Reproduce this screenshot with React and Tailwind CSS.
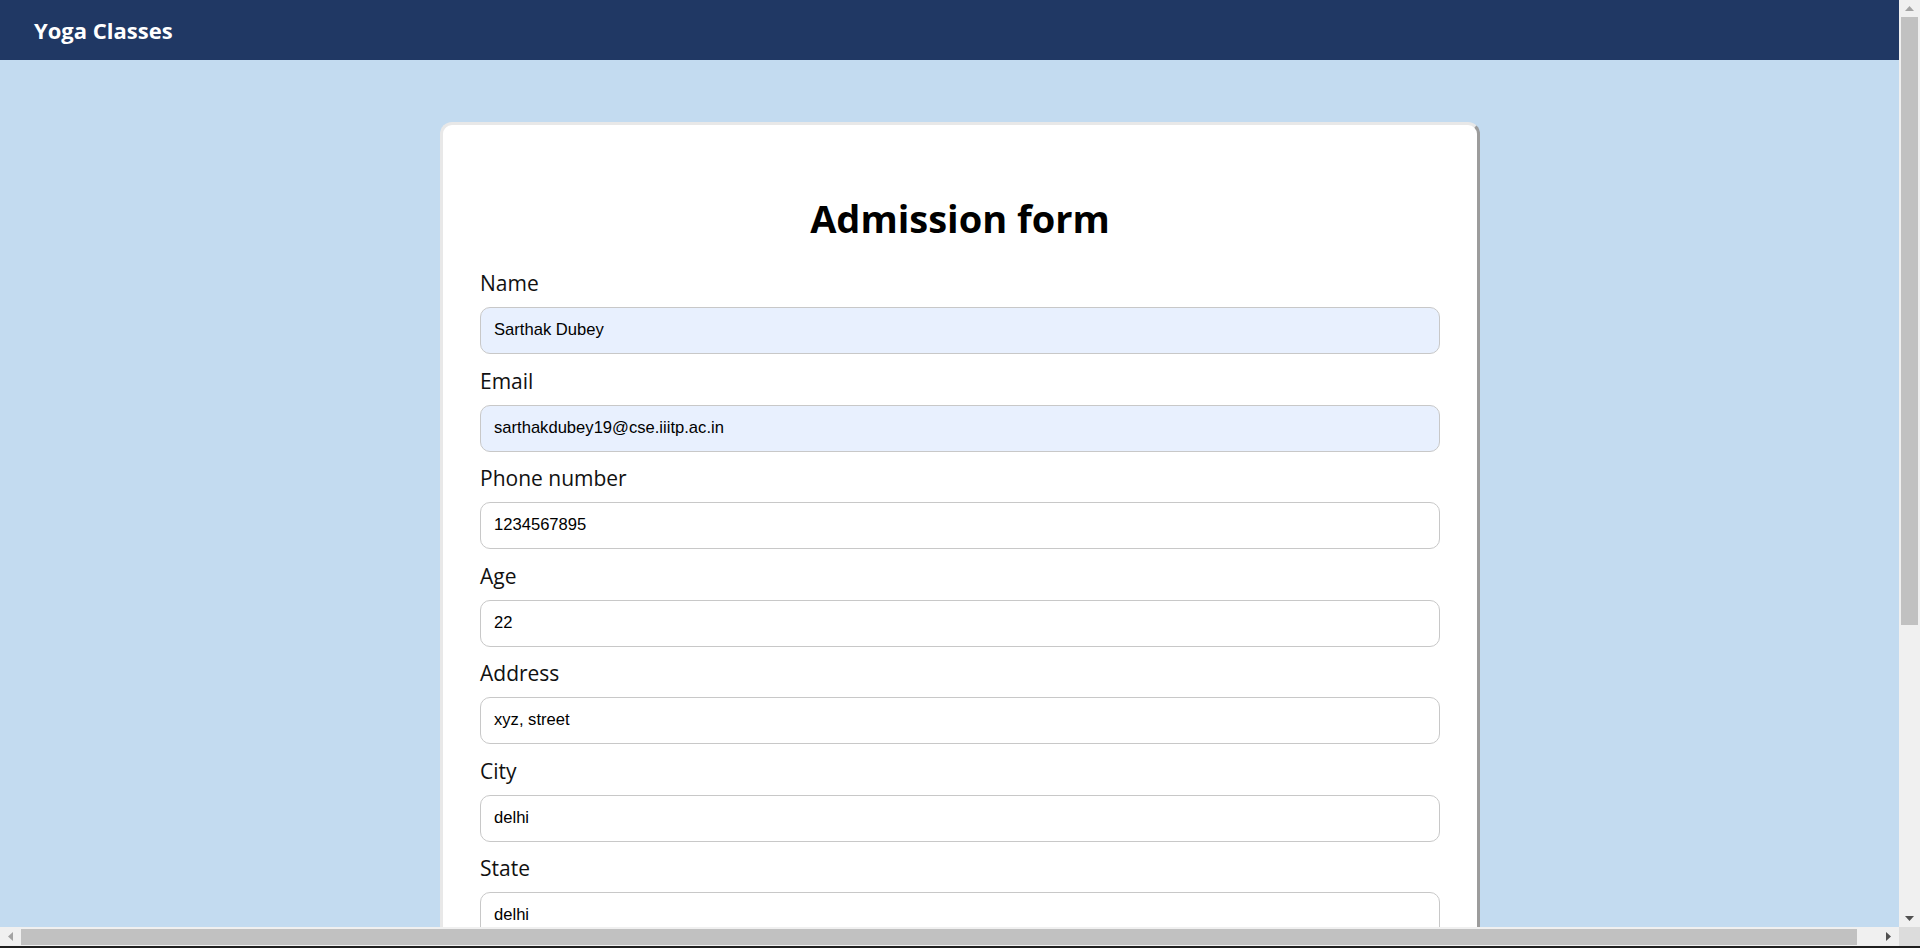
import React from "react";

const fields = [
  { label: "Name", value: "Sarthak Dubey", auto: true },
  { label: "Email", value: "sarthakdubey19@cse.iiitp.ac.in", auto: true },
  { label: "Phone number", value: "1234567895" },
  { label: "Age", value: "22" },
  { label: "Address", value: "xyz, street" },
  { label: "City", value: "delhi" },
  { label: "State", value: "delhi" },
];

function Field({ label, value, auto }) {
  return (
    <div className="flex flex-col mb-[11.5px]">
      <label className="h-[30px] leading-[30px] text-[21px] text-[#111] mb-[9px] font-['Open_Sans',sans-serif]">
        {label}
      </label>
      <div
        className={
          "h-[47px] w-[960px] rounded-[10px] border border-[#c8c8c8] flex items-center pl-[13px] text-[16.6px] text-black font-['Liberation_Sans',Arial,sans-serif] " +
          (auto ? "bg-[#e8f0fe]" : "bg-white")
        }
      >
        {value}
      </div>
    </div>
  );
}

export default function App() {
  return (
    <div className="h-[948px] w-full overflow-hidden flex flex-col bg-[#c3dbf0]">
      <div className="flex flex-1 min-h-0">
        <div className="flex-1 overflow-hidden">
          <div className="w-[1920px]">
            <header className="h-[60px] bg-[#203864] flex items-center pl-[34px]">
              <span className="text-white font-bold text-[22px] font-['Open_Sans',sans-serif]">
                Yoga Classes
              </span>
            </header>
            <div className="pt-[62px]">
              <div className="mx-auto w-[1040px] bg-white rounded-[12px] border-[3px] border-t-[#e8e8e8] border-l-[#e8e8e8] border-r-[#9c9c9c] border-b-[#9c9c9c] px-[37px] pt-[68px] pb-[40px]">
                <h1 className="text-center font-bold text-[38px] leading-[50px] text-black mb-[25px] font-['Open_Sans',sans-serif]">
                  Admission form
                </h1>
                {fields.map((f) => (
                  <Field key={f.label} {...f} />
                ))}
              </div>
            </div>
          </div>
        </div>
        <div className="w-[21px] bg-[#f0f0f0] flex flex-col items-center">
          <div className="h-[17px] w-full flex items-center justify-center">
            <svg width="9" height="5" viewBox="0 0 9 5"><path d="M0 5 L4.5 0 L9 5 Z" fill="#a3a3a3" /></svg>
          </div>
          <div className="w-[17px] h-[608px] bg-[#c1c1c1]" />
          <div className="flex-1" />
          <div className="h-[17px] w-full flex items-center justify-center">
            <svg width="9" height="5" viewBox="0 0 9 5"><path d="M0 0 L9 0 L4.5 5 Z" fill="#505050" /></svg>
          </div>
        </div>
      </div>
      <div className="h-[19px] flex bg-[#f0f0f0]">
        <div className="w-[21px] flex items-center justify-center">
          <svg width="5" height="9" viewBox="0 0 5 9"><path d="M5 0 L0 4.5 L5 9 Z" fill="#a3a3a3" /></svg>
        </div>
        <div className="flex-1 flex items-center">
          <div className="h-[16px] w-[1836px] bg-[#c1c1c1]" />
        </div>
        <div className="w-[21px] flex items-center justify-center">
          <svg width="5" height="9" viewBox="0 0 5 9"><path d="M0 0 L5 4.5 L0 9 Z" fill="#505050" /></svg>
        </div>
        <div className="w-[21px] bg-[#dcdcdc]" />
      </div>
      <div className="h-[2px] bg-[#1e1e1e]" />
    </div>
  );
}
